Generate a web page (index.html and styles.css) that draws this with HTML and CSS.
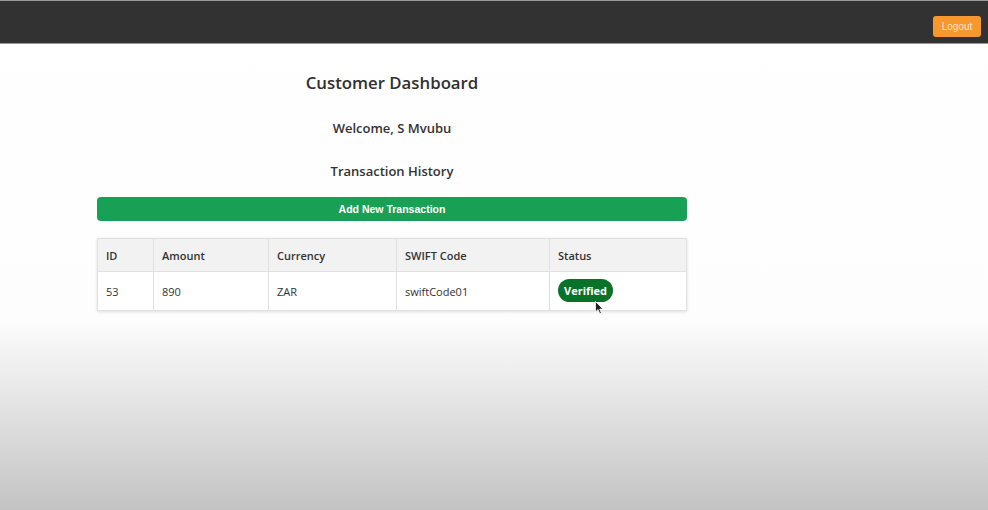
FILE: index.html
```html
<!DOCTYPE html>
<html lang="en">
<head>
<meta charset="utf-8">
<title>Customer Dashboard</title>
<link rel="stylesheet" href="styles.css">
</head>
<body>
<header class="topbar">
  <button class="logout">Logout</button>
</header>
<main class="dashboard">
  <h1 class="title">Customer Dashboard</h1>
  <h2 class="welcome">Welcome, S Mvubu</h2>
  <h2 class="section">Transaction History</h2>
  <button class="add-btn">Add New Transaction</button>
  <table class="tx-table">
    <thead>
      <tr>
        <th class="c-id">ID</th>
        <th class="c-amount">Amount</th>
        <th class="c-currency">Currency</th>
        <th class="c-swift">SWIFT Code</th>
        <th class="c-status">Status</th>
      </tr>
    </thead>
    <tbody>
      <tr>
        <td>53</td>
        <td>890</td>
        <td>ZAR</td>
        <td>swiftCode01</td>
        <td class="status-cell"><span class="badge">Verified</span><svg class="cursor" width="9" height="14" viewBox="0 0 9 14"><path d="M0.5 0.5 L0.5 11 L3 8.6 L4.8 12.8 L6.4 12.1 L4.7 8.1 L8 8.1 Z" fill="#222" stroke="#fff" stroke-width="0.8"/></svg></td>
      </tr>
    </tbody>
  </table>
</main>
</body>
</html>
```
FILE: styles.css
```css
html {
  height: 100%;
}
body {
  margin: 0;
  min-height: 100%;
  font-family: "Open Sans", "Noto Sans", sans-serif;
  color: #333;
  background: linear-gradient(to bottom, #ffffff 0, #fdfdfd 320px, #c3c3c3 510px);
}
.topbar {
  height: 42px;
  background: #323232;
  border-top: 1px solid #9a9a9a;
  border-bottom: 1px solid #9a9a9a;
  display: flex;
  align-items: flex-end;
  justify-content: flex-end;
  padding-right: 7px;
  box-sizing: content-box;
}
.logout {
  font-family: "Liberation Sans", Arial, sans-serif;
  font-size: 10px;
  color: #fbe2c4;
  background: #f7982f;
  border: none;
  border-radius: 3px;
  width: 48px;
  height: 21px;
  padding: 0;
  margin-bottom: 6px;
}
.dashboard {
  width: 590px;
  margin-left: 97px;
  display: flex;
  flex-direction: column;
  align-items: center;
}
.title {
  font-size: 16.8px;
  font-weight: 600;
  margin: 28px 0 0;
  line-height: 22px;
  color: #303030;
}
.welcome,
.section {
  font-size: 13px;
  font-weight: 600;
  line-height: 18px;
  color: #333;
  margin: 0;
}
.welcome {
  margin-top: 25px;
}
.section {
  margin-top: 25px;
}
.add-btn {
  margin-top: 17px;
  width: 100%;
  height: 24px;
  background: #18a155;
  border: none;
  border-radius: 4px;
  color: #fff;
  font-family: "Liberation Sans", Arial, sans-serif;
  font-weight: 700;
  font-size: 10.5px;
  padding: 0;
}
.tx-table {
  margin-top: 17px;
  width: 100%;
  table-layout: fixed;
  border-collapse: collapse;
  font-size: 11px;
  box-shadow: 0 1px 3px rgba(0, 0, 0, 0.12);
  background: #fff;
}
.tx-table th,
.tx-table td {
  border: 1px solid #e0e0e0;
  text-align: left;
  padding: 0 8px;
  box-sizing: border-box;
}
.tx-table th {
  background: #f2f2f2;
  font-weight: 600;
  height: 33px;
  color: #333;
}
.tx-table td {
  height: 39px;
  color: #333;
}
.c-id { width: 56px; }
.c-amount { width: 115px; }
.c-currency { width: 128px; }
.c-swift { width: 153px; }
.status-cell {
  position: relative;
}
.badge {
  display: inline-block;
  background: #097229;
  color: #fff;
  font-weight: 700;
  font-size: 11px;
  line-height: 23px;
  padding: 0 6px;
  border-radius: 12px;
  margin-top: -1px;
}
.cursor {
  position: absolute;
  left: 45px;
  top: 29px;
}
```
